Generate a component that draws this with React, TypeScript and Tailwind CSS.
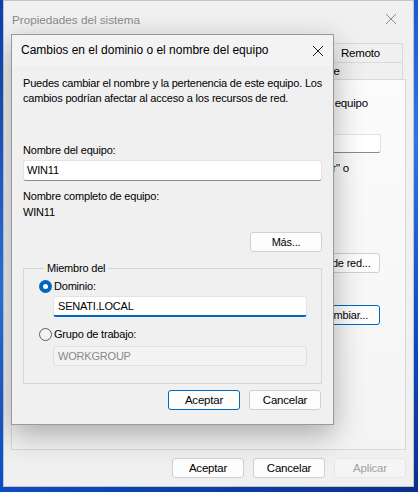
import React from "react";

const CloseIcon = ({ color }: { color: string }) => (
  <svg width="12" height="12" viewBox="0 0 12 12">
    <path d="M1 1 L11 11 M11 1 L1 11" stroke={color} strokeWidth="1" fill="none" />
  </svg>
);

const Button = ({ label, variant = "normal" }: { label: string; variant?: "normal" | "primary" | "disabled" }) => {
  const styles =
    variant === "primary"
      ? "border-[#0067c0] bg-[#fdfdfd] text-black"
      : variant === "disabled"
      ? "border-[#e6e6e6] bg-[#f5f5f5] text-[#a0a0a0]"
      : "border-[#d0d0d0] bg-[#fdfdfd] text-black";
  return (
    <div className={`flex items-center justify-center w-[72px] h-[20px] rounded-[3px] border ${styles}`}>
      <span>{label}</span>
    </div>
  );
};

const Radio = ({ checked }: { checked?: boolean }) =>
  checked ? (
    <div className="flex items-center justify-center w-[13px] h-[13px] rounded-full bg-[#0067c0]">
      <div className="w-[5px] h-[5px] rounded-full bg-white" />
    </div>
  ) : (
    <div className="w-[13px] h-[13px] rounded-full border border-[#5d5d5d] bg-[#f3f3f3]" />
  );

const App = () => {
  return (
    <div className="relative w-[418px] h-[492px] overflow-hidden bg-[linear-gradient(160deg,#0b3fae_0%,#2a78e4_45%,#0c4dc4_75%,#0a2f8c_100%)] font-['Liberation_Sans',Arial,sans-serif] text-[11px] tracking-[-0.2px] leading-[15px] text-black">
      {/* outer window */}
      <div className="absolute left-[3px] top-0 w-[411px] h-[487px] flex flex-col bg-[#f0f0f0] border border-[#c4c4c4]">
        <div className="flex items-center justify-between h-[36px] pl-[8px] pr-[16px] text-[#8a8a8a]">
          <span className="text-[11.7px] tracking-normal">Propiedades del sistema</span>
          <CloseIcon color="#8a8a8a" />
        </div>
        <div className="mt-[6px] flex flex-col pl-[7px] pr-[10px]">
          <div className="flex h-[19px]">
            <div className="w-[120px] border border-[#d9d9d9] border-b-0" />
            <div className="w-[188px] border border-[#d9d9d9] border-b-0 border-l-0" />
            <div className="flex items-center justify-center w-[84px] border border-[#d9d9d9] border-b-0 border-l-0 text-[11.5px]">Remoto</div>
          </div>
          <div className="flex h-[17px]">
            <div className="w-[218px] border border-[#d9d9d9] border-b-0" />
            <div className="flex items-center justify-center w-[174px] border border-[#d9d9d9] border-b-0 border-l-0 text-[11.5px]">Hardware</div>
          </div>
        </div>
        <div className="mx-[7px] h-[371px] flex flex-col items-end border border-[#d9d9d9] bg-[linear-gradient(180deg,#fbfbfb,#f4f4f4)] pt-[16px] overflow-hidden">
          <span className="whitespace-nowrap mr-[37px] text-[11.5px]">su equipo</span>
          <div className="mt-[23px] mr-[24px] w-[200px] h-[19px] bg-white border border-[#e3e3e3] border-b-[#8a8a8a] rounded-[3px]" />
          <span className="mt-[8px] mr-[56px] whitespace-nowrap text-[11.5px]">"Computador" o</span>
          <div className="mt-[77px] mr-[25px]">
            <Button label="Id. de red..." />
          </div>
          <div className="mt-[32px] mr-[25px]">
            <Button label="Cambiar..." variant="primary" />
          </div>
        </div>
        <div className="mt-[8px] flex justify-end gap-[9px] pr-[7px] text-[11.5px]">
          <Button label="Aceptar" />
          <Button label="Cancelar" />
          <Button label="Aplicar" variant="disabled" />
        </div>
      </div>

      {/* inner dialog */}
      <div className="absolute left-[11px] top-[34px] w-[323px] h-[391px] flex flex-col bg-[#f0f0f0] border border-[#9a9a9a] shadow-[0_10px_28px_rgba(0,0,0,0.3)]">
        <div className="flex items-center justify-between h-[31px] pl-[9px] pr-[9px] bg-[#f3f3f3]">
          <span className="text-[12px] tracking-normal">Cambios en el dominio o el nombre del equipo</span>
          <CloseIcon color="#1a1a1a" />
        </div>
        <div className="flex flex-col pl-[11px] pr-[11px]">
          <p className="mt-[10px] whitespace-nowrap">
            Puedes cambiar el nombre y la pertenencia de este equipo. Los
            <br />
            cambios podrían afectar al acceso a los recursos de red.
          </p>
          <span className="mt-[37px]">Nombre del equipo:</span>
          <div className="mt-[2px] h-[21px] flex items-center pl-[3px] bg-white border border-[#e3e3e3] border-b-[#8a8a8a] rounded-[3px]">
            WIN11
          </div>
          <div className="mt-[7px] flex flex-col leading-[16px]">
            <span>Nombre completo de equipo:</span>
            <span>WIN11</span>
          </div>
          <div className="mt-[12px] self-end">
            <Button label="Más..." />
          </div>
          <fieldset className="mt-[9px] border border-[#d6d6d6] pl-[15px] pr-[14px] pb-[17px]">
            <legend className="ml-[5px] px-[3px]">Miembro del</legend>
            <div className="mt-[3px] flex items-center gap-[2px] h-[15px]">
              <Radio checked />
              <span>Dominio:</span>
            </div>
            <div className="mt-[2px] ml-[14px] h-[21px] flex items-center pl-[4px] bg-white border border-[#e3e3e3] border-b-2 border-b-[#0067c0] rounded-[3px]">
              SENATI.LOCAL
            </div>
            <div className="mt-[10px] flex items-center gap-[2px] h-[15px]">
              <Radio />
              <span>Grupo de trabajo:</span>
            </div>
            <div className="mt-[4px] ml-[14px] h-[20px] flex items-center pl-[4px] bg-[#f3f3f3] border border-[#e0e0e0] rounded-[3px] text-[#8a8a8a]">
              WORKGROUP
            </div>
          </fieldset>
          <div className="mt-[6px] flex justify-end gap-[9px] pr-[1px] text-[11.5px]">
            <Button label="Aceptar" variant="primary" />
            <Button label="Cancelar" />
          </div>
        </div>
      </div>
    </div>
  );
};

export default App;
